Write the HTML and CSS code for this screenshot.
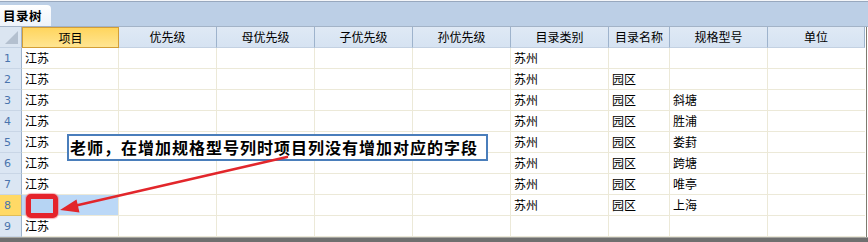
FILE: index.html
```html
<!DOCTYPE html>
<html lang="zh-CN">
<head>
<meta charset="utf-8">
<title>目录树</title>
<link rel="stylesheet" href="styles.css">
</head>
<body>
<div class="window">
  <div class="tabbar">
    <div class="tab">目录树</div>
  </div>
  <div class="gridwrap">
    <div class="grid">
      <div class="hc corner"><span class="tri"></span></div>
      <div class="hc active">项目</div>
      <div class="hc">优先级</div>
      <div class="hc">母优先级</div>
      <div class="hc">子优先级</div>
      <div class="hc">孙优先级</div>
      <div class="hc">目录类别</div>
      <div class="hc">目录名称</div>
      <div class="hc">规格型号</div>
      <div class="hc">单位</div>

      <div class="rh">1</div><div class="c">江苏</div><div class="c"></div><div class="c"></div><div class="c"></div><div class="c"></div><div class="c">苏州</div><div class="c"></div><div class="c"></div><div class="c"></div>
      <div class="rh">2</div><div class="c">江苏</div><div class="c"></div><div class="c"></div><div class="c"></div><div class="c"></div><div class="c">苏州</div><div class="c">园区</div><div class="c"></div><div class="c"></div>
      <div class="rh">3</div><div class="c">江苏</div><div class="c"></div><div class="c"></div><div class="c"></div><div class="c"></div><div class="c">苏州</div><div class="c">园区</div><div class="c">斜塘</div><div class="c"></div>
      <div class="rh">4</div><div class="c">江苏</div><div class="c"></div><div class="c"></div><div class="c"></div><div class="c"></div><div class="c">苏州</div><div class="c">园区</div><div class="c">胜浦</div><div class="c"></div>
      <div class="rh">5</div><div class="c">江苏</div><div class="c"></div><div class="c"></div><div class="c"></div><div class="c"></div><div class="c">苏州</div><div class="c">园区</div><div class="c">娄葑</div><div class="c"></div>
      <div class="rh">6</div><div class="c">江苏</div><div class="c"></div><div class="c"></div><div class="c"></div><div class="c"></div><div class="c">苏州</div><div class="c">园区</div><div class="c">跨塘</div><div class="c"></div>
      <div class="rh">7</div><div class="c">江苏</div><div class="c"></div><div class="c"></div><div class="c"></div><div class="c"></div><div class="c">苏州</div><div class="c">园区</div><div class="c">唯亭</div><div class="c"></div>
      <div class="rh sel">8</div><div class="c selcell"></div><div class="c"></div><div class="c"></div><div class="c"></div><div class="c"></div><div class="c">苏州</div><div class="c">园区</div><div class="c">上海</div><div class="c"></div>
      <div class="rh">9</div><div class="c">江苏</div><div class="c"></div><div class="c"></div><div class="c"></div><div class="c"></div><div class="c"></div><div class="c"></div><div class="c"></div><div class="c"></div>
    </div>

    <div class="note">老师，在增加规格型号列时项目列没有增加对应的字段</div>
    <div class="redbox"></div>
    <svg class="arrow" width="868" height="215" viewBox="0 27 868 215" xmlns="http://www.w3.org/2000/svg">
      <line x1="287" y1="157" x2="74" y2="206" stroke="#e2262b" stroke-width="2.5" stroke-linecap="round"/>
      <polygon points="60,210 76.5,199.5 79.5,212.5" fill="#e2262b"/>
    </svg>
  </div>
  <div class="bottom"></div>
</div>
</body>
</html>
```
FILE: styles.css
```css
html, body {
  margin: 0;
  padding: 0;
  background: #ffffff;
}

.window {
  width: 868px;
  height: 242px;
  overflow: hidden;
  font-family: "Noto Sans CJK SC", "Noto Sans", sans-serif;
  font-size: 12px;
  color: #000;
  border-top: 1px solid #f4f6f9;
  box-sizing: border-box;
}

.tabbar {
  height: 26px;
  background: #bccfe6;
  border-top: 1px solid #98a8be;
  border-bottom: 1px solid #a3b3c7;
  box-sizing: border-box;
  display: flex;
  align-items: flex-end;
}

.tab {
  width: 51px;
  height: 21px;
  background: linear-gradient(#ffffff, #eef3fa);
  border-top-right-radius: 4px;
  font-weight: 700;
  font-size: 12.5px;
  line-height: 21px;
  padding-left: 3px;
  box-sizing: border-box;
  letter-spacing: 0.5px;
}

.gridwrap {
  position: relative;
  height: 210px;
}

.grid {
  display: grid;
  grid-template-columns: 22px 97px 98px 98px 98px 98px 98px 61px 98px 97px;
  grid-template-rows: 21px repeat(9, 21px);
  border-right: 1px solid #7d7b6e;
  width: 866px;
}

.hc {
  background: linear-gradient(#dfe9f5, #d6e3f2);
  border-right: 1px solid #9eb3cc;
  border-bottom: 1px solid #c3d1e2;
  box-sizing: border-box;
  display: flex;
  align-items: center;
  justify-content: center;
  line-height: 1;
}

.hc:last-child {
  border-right: none;
}

.hc.corner {
  position: relative;
  background: #dbe5f1;
}

.tri {
  position: absolute;
  right: 3px;
  bottom: 3px;
  width: 0;
  height: 0;
  border-left: 13px solid transparent;
  border-bottom: 13px solid #b4c0cf;
}

.hc.active {
  background: linear-gradient(#ffd55e, #ffe592);
  border: 1px solid #d39e36;
}

.rh {
  background: #dbe6f3;
  border-right: 1px solid #9eb3cc;
  border-bottom: 1px solid #c9d6e6;
  box-sizing: border-box;
  color: #4a74ad;
  padding-left: 4px;
  display: flex;
  align-items: center;
  font-family: "DejaVu Sans", sans-serif;
  font-size: 11px;
}

.rh.sel {
  background: #ffd966;
  border-bottom-color: #e0bd57;
}

.c {
  border-right: 1px solid #ece9d8;
  border-bottom: 1px solid #ece9d8;
  box-sizing: border-box;
  padding-left: 3px;
  display: flex;
  align-items: center;
  line-height: 1;
  white-space: nowrap;
}

.grid .c:nth-child(10n) {
  border-right: none;
}

.c.selcell {
  background: #bbd8f7;
}

.note {
  position: absolute;
  left: 67px;
  top: 107px;
  width: 421px;
  height: 27px;
  box-sizing: border-box;
  border: 2px solid #4a7ebb;
  background: #ffffff;
  font-weight: 700;
  font-size: 16px;
  letter-spacing: 1px;
  line-height: 22px;
  padding-left: 1px;
  white-space: nowrap;
}

.redbox {
  position: absolute;
  left: 26px;
  top: 167px;
  width: 32px;
  height: 24px;
  box-sizing: border-box;
  border: 5px solid #e5232b;
  border-radius: 5px;
  background: #b6d4f3;
  box-shadow: 0 0 1px 1px rgba(240, 120, 130, 0.6);
}

.arrow {
  position: absolute;
  left: 0;
  top: 0;
}

.bottom {
  height: 5px;
  background: #6f6f6f;
  border-top: 1px solid #a5a5a0;
  box-sizing: border-box;
}
```
